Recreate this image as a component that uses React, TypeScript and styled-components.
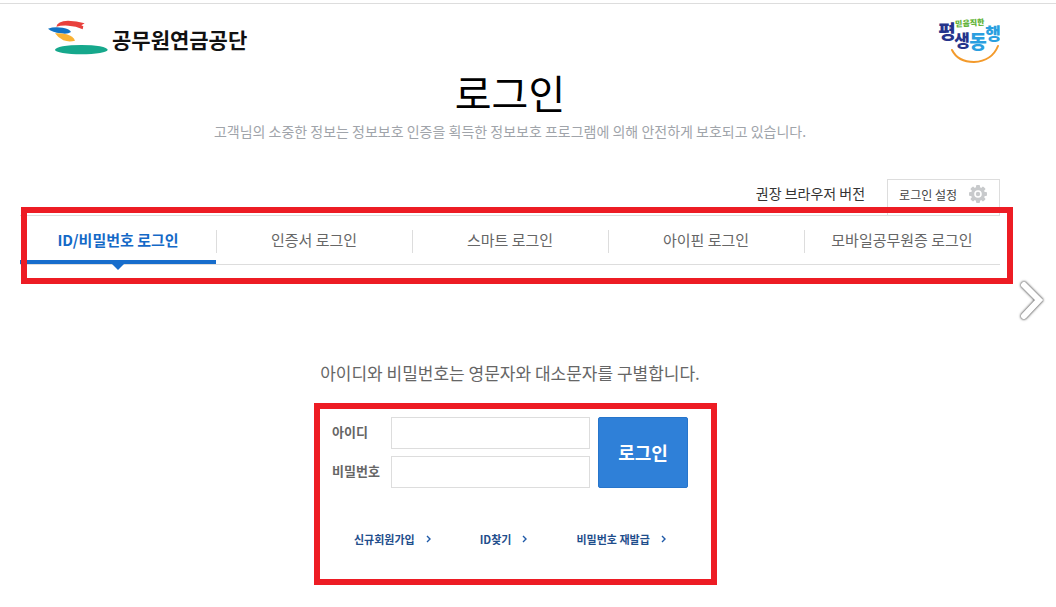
import React from 'react';
import styled, { createGlobalStyle } from 'styled-components';

const GlobalStyle = createGlobalStyle`
  *, *::before, *::after { box-sizing: border-box; }
  body {
    margin: 0;
    background: #fff;
    color: #666;
    font-family: "Noto Sans CJK KR", "Noto Sans", sans-serif;
    font-size: 14px;
    line-height: 20px;
  }
  a { color: inherit; text-decoration: none; }
  button, input { font-family: inherit; }
`;

const Page = styled.div`
  position: relative;
  padding: 0 56px 40px 20px;
  margin-top: 3px;
  border-top: 1px solid #ddd;
`;

const Header = styled.header`
  display: flex;
  justify-content: space-between;
  align-items: flex-start;
  padding: 12px 0 0 28px;
  height: 64px;
`;

const Brand = styled.a`
  display: flex;
  align-items: flex-start;
  gap: 4px;
  margin-top: 3px;
  color: #111;
  font-size: 21px;
  line-height: 40px;
  font-weight: 700;
`;

const Intro = styled.div`
  text-align: center;
`;

const Title = styled.h1`
  margin: 0 0 5px;
  color: #000;
  font-size: 40px;
  line-height: 48px;
  font-weight: 400;
`;

const Notice = styled.p`
  margin: 0;
  color: #a0a4aa;
`;

const Tools = styled.div`
  display: flex;
  justify-content: flex-end;
  gap: 22px;
  margin-top: 38px;
  color: #333;
  line-height: 28px;
`;

const SettingsButton = styled.button`
  display: flex;
  align-items: center;
  gap: 12px;
  height: 36px;
  padding: 0 12px 7px 11px;
  border: 1px solid #ddd;
  border-bottom: 0;
  background: #fff;
  color: #444;
  font-size: 12px;
`;

const Tabs = styled.nav`
  position: relative;
  display: grid;
  grid-template-columns: repeat(5, 1fr);
  border: solid #ddd;
  border-width: 1px 0;
`;

const Tab = styled.a<{ $active?: boolean }>`
  position: relative;
  display: flex;
  justify-content: center;
  height: 48px;
  font-size: 15px;
  line-height: 47px;
  font-weight: ${p => (p.$active ? 700 : 400)};
  color: ${p => (p.$active ? '#1469c7' : '#666')};
  border-bottom: ${p => (p.$active ? '4px solid #176dcc' : '0')};

  &:not(:first-child)::before {
    content: '';
    position: absolute;
    left: 0;
    top: 14px;
    height: 23px;
    border-left: 1px solid #ddd;
  }
`;

const Pointer = styled.span`
  position: absolute;
  top: 48px;
  left: 50%;
  margin-left: -6px;
  border: 6px solid transparent;
  border-top-color: #176dcc;
  border-bottom: 0;
`;

const Highlight = styled.div<{ $inset: string }>`
  position: absolute;
  inset: ${p => p.$inset};
  border: 6px solid #ed1c24;
  pointer-events: none;
`;

const Guide = styled.p`
  margin: 96px 0 32px;
  text-align: center;
  font-size: 17px;
  line-height: 24px;
`;

const LoginArea = styled.section`
  position: relative;
  width: 356px;
  margin: 0 auto;
`;

const LoginForm = styled.form`
  display: flex;
  gap: 8px;
`;

const Fields = styled.div`
  flex: 1;
  display: flex;
  flex-direction: column;
  gap: 7px;
`;

const Field = styled.div`
  display: flex;
`;

const Label = styled.label`
  width: 59px;
  font-size: 13px;
  line-height: 30px;
  font-weight: 700;
`;

const TextBox = styled.input`
  flex: 1;
  min-width: 0;
  height: 32px;
  padding: 0 8px;
  border: 1px solid #ddd;
  background: #fff;
`;

const SubmitButton = styled.button`
  width: 90px;
  padding: 0 0 2px;
  border: 1px solid #2775cb;
  border-radius: 2px;
  background: #2f80d8;
  color: #fff;
  font-size: 18px;
  font-weight: 700;
`;

const HelpLinks = styled.div`
  display: flex;
  gap: 49px;
  margin-top: 41px;
  padding-left: 22px;
`;

const HelpLink = styled.a`
  display: flex;
  align-items: center;
  gap: 11px;
  color: #1f4e8c;
  font-size: 11px;
  font-weight: 700;
`;

const NextButton = styled.button`
  position: absolute;
  top: 274px;
  right: 8px;
  padding: 0;
  border: 0;
  background: none;
  svg {
    display: block;
    filter: drop-shadow(0 0 1px #555) drop-shadow(0 0 1px #999);
  }
`;

const BrandMark = () => (
  <svg width="60" height="36" viewBox="24 56 180 108" aria-hidden="true">
    <path d="M49 79Q52 62 84 61Q110 61 134 69L124 75L130 78L128 87Q108 77 85 76Q62 75 49 79Z" fill="#e8403c" />
    <path d="M24 85Q42 78 68 82Q90 86 93 95Q84 102 62 99Q38 96 24 85Z" fill="#1273c4" />
    <path d="M45 99Q62 98 80 102Q100 108 105 121Q88 126 70 120Q55 113 45 99Z" fill="#f9b233" />
    <ellipse cx="124" cy="148" rx="79" ry="14" fill="#16a88c" />
  </svg>
);

const Emblem = () => (
  <svg width="66" height="50" viewBox="0 0 66 50" role="img" aria-label="믿음직한 평생동행" fontWeight="900">
    <path d="M18 34Q24 46 40 46Q58 45 64 30" fill="none" stroke="#f39a2b" strokeWidth="2" strokeLinecap="round" />
    <g textAnchor="middle" fontSize="17">
      <text x="13" y="23" fontSize="19" fill="#25348b">평</text>
      <text x="28" y="31" fill="#25348b">생</text>
      <text x="44" y="33" fontSize="19" fill="#2a9fe0">동</text>
      <text x="59" y="24" fill="#2a9fe0">행</text>
      <text x="36" y="10" fontSize="8" fill="#5fb336" transform="rotate(-4 36 10)">믿음직한</text>
    </g>
  </svg>
);

const Gear = () => (
  <svg width="18" height="18" viewBox="-9 -9 18 18" fill="#c8cacc" aria-hidden="true">
    {[0, 45, 90, 135].map(a => (
      <rect key={a} x="-2" y="-9" width="4" height="18" rx="1" transform={`rotate(${a})`} />
    ))}
    <circle r="7" />
    <circle r="3" fill="none" stroke="#fff" strokeWidth="1.6" />
  </svg>
);

const SmallArrow = () => (
  <svg width="5" height="8" viewBox="0 0 5 8" fill="none" stroke="#1f5aa8" strokeWidth="1.4" aria-hidden="true">
    <path d="M1 1L4 4L1 7" />
  </svg>
);

const tabs = ['ID/비밀번호 로그인', '인증서 로그인', '스마트 로그인', '아이핀 로그인', '모바일공무원증 로그인'];
const links = ['신규회원가입', 'ID찾기', '비밀번호 재발급'];

export default function App() {
  return (
    <>
      <GlobalStyle />
      <Page>
        <Header>
          <Brand href="#"><BrandMark />공무원연금공단</Brand>
          <Emblem />
        </Header>
        <main>
          <Intro>
            <Title>로그인</Title>
            <Notice>고객님의 소중한 정보는 정보보호 인증을 획득한 정보보호 프로그램에 의해 안전하게 보호되고 있습니다.</Notice>
          </Intro>
          <Tools>
            <a href="#">권장 브라우저 버전</a>
            <SettingsButton type="button">로그인 설정<Gear /></SettingsButton>
          </Tools>
          <Tabs>
            {tabs.map((name, i) => (
              <Tab key={name} href="#" $active={i === 0} aria-current={i === 0 ? 'page' : undefined}>
                {name}
                {i === 0 && <Pointer />}
              </Tab>
            ))}
            <Highlight $inset="-9px -13px -20px 1px" />
          </Tabs>
          <Guide>아이디와 비밀번호는 영문자와 대소문자를 구별합니다.</Guide>
          <LoginArea>
            <LoginForm onSubmit={e => e.preventDefault()}>
              <Fields>
                <Field>
                  <Label htmlFor="user-id">아이디</Label>
                  <TextBox id="user-id" type="text" />
                </Field>
                <Field>
                  <Label htmlFor="user-pw">비밀번호</Label>
                  <TextBox id="user-pw" type="password" />
                </Field>
              </Fields>
              <SubmitButton type="submit">로그인</SubmitButton>
            </LoginForm>
            <HelpLinks>
              {links.map(name => (
                <HelpLink key={name} href="#">{name}<SmallArrow /></HelpLink>
              ))}
            </HelpLinks>
            <Highlight $inset="-14px -29px -36px -18px" />
          </LoginArea>
        </main>
        <NextButton type="button" aria-label="다음">
          <svg width="32" height="46" viewBox="0 0 32 46" fill="none" strokeLinecap="round" strokeLinejoin="miter">
            <path d="M8 7L23 22L8 38" stroke="#fff" strokeWidth="6" />
          </svg>
        </NextButton>
      </Page>
    </>
  );
}
